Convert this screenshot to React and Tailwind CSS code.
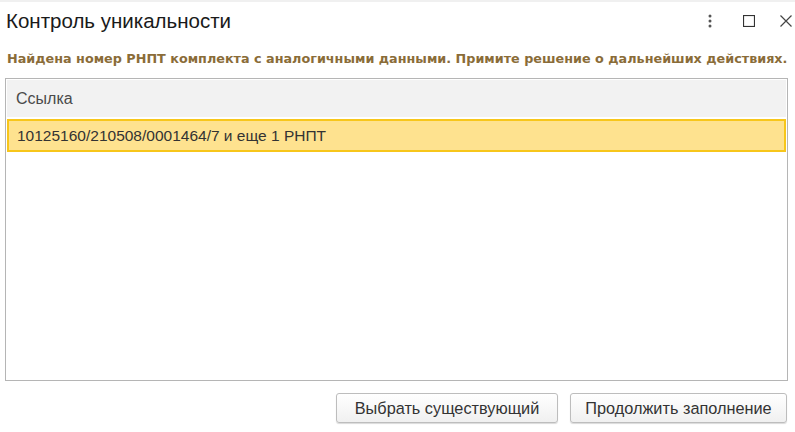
import React from "react";

export default function App() {
  return (
    <div className="w-[795px] h-[432px] bg-white flex flex-col overflow-hidden" style={{ fontFamily: '"Liberation Sans", Arial, sans-serif' }}>
      <div className="h-[2px] bg-[#f0f0f0]" />
      <div className="h-[38px] flex items-center justify-between pl-[6px] pr-[3px]">
        <div className="text-[20.5px] leading-none text-[#1a1a1a]">Контроль уникальности</div>
        <div className="flex items-center h-full">
          <svg width="4" height="14" viewBox="0 0 4 14">
            <circle cx="2" cy="2" r="1.5" fill="#555" />
            <circle cx="2" cy="7" r="1.5" fill="#555" />
            <circle cx="2" cy="12" r="1.5" fill="#555" />
          </svg>
          <svg className="ml-[31px]" width="12" height="12" viewBox="0 0 12 12">
            <rect x="0.5" y="0.5" width="11" height="11" fill="none" stroke="#333" strokeWidth="1.2" />
          </svg>
          <svg className="ml-[25px]" width="12" height="12" viewBox="0 0 12 12">
            <path d="M0.5 0.5 L11.5 11.5 M11.5 0.5 L0.5 11.5" stroke="#444" strokeWidth="1.2" />
          </svg>
        </div>
      </div>
      <div className="h-[38px] pl-[7px] pt-[9px] text-[12.77px] font-bold text-[#8a6c38] whitespace-nowrap" style={{ fontFamily: '"DejaVu Sans", Verdana, sans-serif' }}>
        Найдена номер РНПТ комплекта с аналогичными данными. Примите решение о дальнейших действиях.
      </div>
      <div className="ml-[5px] w-[783px] h-[303px] border border-[#b5b5b5] flex flex-col">
        <div className="h-[39px] bg-[#f2f2f2] border border-white flex items-center pl-[9px] text-[16px] text-[#4a4a4a]">Ссылка</div>
        <div className="mt-[1px] mx-[1px] h-[33px] bg-[#fee28f] border-2 border-[#f7c61b] flex items-center pl-[8px] text-[15.5px] text-[#333]">
          10125160/210508/0001464/7 и еще 1 РНПТ
        </div>
      </div>
      <div className="flex justify-end gap-[12px] pr-[8px] pt-[12px]">
        <button className="w-[222px] h-[30px] rounded-[3px] border border-[#bdbdbd] bg-gradient-to-b from-white to-[#f0f0f0] shadow-[0_1px_1px_rgba(0,0,0,0.15)] text-[16.3px] text-[#333]">Выбрать существующий</button>
        <button className="w-[217px] h-[30px] rounded-[3px] border border-[#bdbdbd] bg-gradient-to-b from-white to-[#f0f0f0] shadow-[0_1px_1px_rgba(0,0,0,0.15)] text-[16.3px] text-[#333]">Продолжить заполнение</button>
      </div>
    </div>
  );
}
